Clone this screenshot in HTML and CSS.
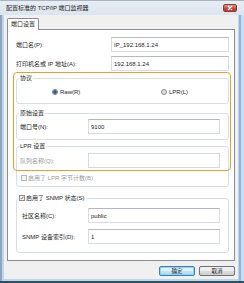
FILE: index.html
```html
<!DOCTYPE html>
<html lang="zh-CN">
<head>
<meta charset="utf-8">
<title>配置标准的 TCP/IP 端口监视器</title>
<link rel="stylesheet" href="styles.css">
</head>
<body>
<div class="window">
  <div class="titlebar">
    <span class="title">配置标准的 TCP/IP 端口监视器</span>
    <span class="close"><svg width="14" height="8" viewBox="0 0 14 8"><path d="M5 2 L9 6 M9 2 L5 6" stroke="#fff" stroke-width="1.4" stroke-linecap="round"/></svg></span>
  </div>
  <div class="client">
    <div class="tabs"><div class="tab">端口设置</div></div>
    <div class="panel">
      <div class="row toprow first"><span class="lbl">端口名(P):</span><div class="inp wide">IP_192.168.1.24</div></div>
      <div class="row toprow second"><span class="lbl">打印机名或 IP 地址(A):</span><div class="inp wide">192.168.1.24</div></div>

      <fieldset class="fs proto">
        <legend>协议</legend>
        <div class="radios">
          <div class="radio"><span class="dot on"></span><span>Raw(R)</span></div>
          <div class="radio"><span class="dot"></span><span>LPR(L)</span></div>
        </div>
      </fieldset>

      <fieldset class="fs raw">
        <legend>原始设置</legend>
        <div class="row"><span class="lbl">端口号(N):</span><div class="inp narrow">9100</div></div>
      </fieldset>

      <fieldset class="fs lpr">
        <legend>LPR 设置</legend>
        <div class="row"><span class="lbl dis">队列名称(Q):</span><div class="inp narrow disabled"></div></div>
        <div class="check dis"><span class="box off"></span><span>启用了 LPR 字节计数(B)</span></div>
      </fieldset>

      <fieldset class="fs snmp">
        <legend><span class="check"><span class="box on"><svg width="6" height="6" viewBox="0 0 6 6"><path d="M1 3 L2.4 4.6 L5 1.2" fill="none" stroke="#2a4f9e" stroke-width="1.1"/></svg></span><span>启用了 SNMP 状态(S)</span></span></legend>
        <div class="row"><span class="lbl">社区名称(C):</span><div class="inp narrow">public</div></div>
        <div class="row gap"><span class="lbl">SNMP 设备索引(D):</span><div class="inp narrow">1</div></div>
      </fieldset>

      <div class="highlight"></div>
    </div>
    <div class="buttons">
      <div class="btn default">确定</div>
      <div class="btn">取消</div>
    </div>
  </div>
</div>
</body>
</html>
```
FILE: styles.css
```css
* { box-sizing: border-box; }
html, body { margin: 0; padding: 0; }
body {
  width: 244px;
  height: 283px;
  overflow: hidden;
  font-family: "Liberation Sans", "Noto Sans CJK SC", sans-serif;
  font-size: 6px;
  line-height: 8px;
  color: #1e1e1e;
  background: #bcd4ec;
}
.window {
  width: 244px;
  height: 283px;
  display: flex;
  flex-direction: column;
  background: linear-gradient(90deg, #8ea6bd 0, #8ea6bd 2px, #bdd5ed 2px, #bdd5ed 239px, #8fb3d9 239px, #8fb3d9 241px, #c4dbf1 241px);
  border-bottom: 2px solid #2c5262;
}
.titlebar {
  height: 15px;
  flex: none;
  display: flex;
  align-items: center;
  padding-left: 6px;
  background: linear-gradient(#e7edf4, #dbe5ef);
  border-top: 1px solid #a9b4bf;
}
.title { color: #1e1e1e; }
.close {
  margin-left: auto;
  margin-right: 7px;
  width: 14px;
  height: 8px;
  display: flex;
  border: 1px solid #8c3a33;
  border-radius: 2px;
  background: linear-gradient(#e2958c, #c8493f 55%, #b9372c);
  align-items: center;
  justify-content: center;
}
.close svg { display: block; }
.client {
  flex: none;
  height: 264px;
  margin: 0 6px 0 4px;
  background: #f0f0f0;
  padding: 3px 3px 0 3px;
  display: flex;
  flex-direction: column;
}
.tabs { display: flex; flex: none; height: 11px; }
.tab {
  position: relative;
  z-index: 1;
  width: 32px;
  height: 12px;
  border: 1px solid #898c95;
  border-bottom: none;
  border-radius: 2px 2px 0 0;
  background: #fff;
  padding-left: 3px;
  line-height: 10px;
}
.panel {
  position: relative;
  flex: none;
  background: #fff;
  border: 1px solid #898c95;
  padding-bottom: 7px;
  display: flex;
  flex-direction: column;
}
.row {
  display: flex;
  align-items: center;
  justify-content: space-between;
  height: 15px;
}
.toprow { padding: 0 5px 0 8px; }
.toprow.first { margin-top: 7px; }
.toprow.second { margin-top: 4px; }
.inp {
  height: 15px;
  border: 1px solid #d9dde2;
  border-top-color: #b4b8bf;
  background: #fff;
  padding-left: 2px;
  display: flex;
  align-items: center;
  color: #1e1e1e;
}
.inp.wide { width: 118px; }
.inp.narrow { width: 132px; }
.inp.disabled { border-color: #d6d8dc; }
.lbl { white-space: nowrap; }
.dis { color: #9a9a9a; }

.fs {
  margin: 0 5px 0 8px;
  min-width: 0;
  border: 1px solid #d5dfe5;
  border-radius: 3px;
  padding: 0 8px 0 3px;
}
.fs legend {
  padding: 0 1px;
  margin-left: -1px;
  height: 8px;
  line-height: 8px;
}
.proto { margin-top: 3px; padding-top: 6px; padding-bottom: 7px; }
.raw { margin-top: 5px; padding-top: 2px; padding-bottom: 5px; }
.lpr { margin-top: 2px; padding-top: 3px; padding-bottom: 4px; }
.snmp { margin-top: 7px; padding-top: 6px; padding-bottom: 8px; padding-left: 5px; }
.snmp legend { margin-left: -4px; }
.row.gap { margin-top: 6px; }

.radios {
  display: grid;
  grid-template-columns: 109px auto;
  margin-left: 32px;
  height: 8px;
}
.radio { display: flex; align-items: center; gap: 2px; }
.dot {
  width: 6px;
  height: 6px;
  border-radius: 50%;
  border: 1px solid #8e8f8f;
  background: radial-gradient(circle, #e8e8e8, #c8c8c8);
  position: relative;
}
.dot.on { background: radial-gradient(circle, #2b5c8a 0, #2b5c8a 1.5px, #c8dcec 2px); border-color: #5f7d99; }

.check { display: flex; align-items: center; gap: 1px; height: 8px; }
.lpr .check { margin-top: 6px; margin-left: 1px; }
.box {
  width: 6px;
  height: 6px;
  border: 1px solid #8f8f8f;
  background: linear-gradient(#f0f0f0, #ffffff);
  display: flex;
  align-items: center;
  justify-content: center;
}
.box.off { border-color: #b8b8b8; background: #f4f4f4; }
.box svg { display: block; }

.highlight {
  position: absolute;
  left: 5px;
  top: 42px;
  width: 218px;
  height: 99px;
  border: 1.5px solid #f29b2d;
  border-radius: 4px;
  pointer-events: none;
}

.buttons {
  display: flex;
  justify-content: flex-end;
  gap: 4px;
  margin-top: 5px;
}
.btn {
  width: 36px;
  height: 10px;
  border: 1px solid #707070;
  border-radius: 2px;
  background: linear-gradient(#f2f2f2 0, #ebebeb 50%, #dddddd 50%, #cfcfcf 100%);
  text-align: center;
  line-height: 8px;
  font-size: 5.5px;
}
.btn.default {
  border-color: #3c7fb1;
  background: linear-gradient(#eaf6fd 0, #d9f0fc 50%, #bee6fd 50%, #a7d9f5 100%);
  box-shadow: inset 0 0 0 1px #8fd3f7;
}
```
